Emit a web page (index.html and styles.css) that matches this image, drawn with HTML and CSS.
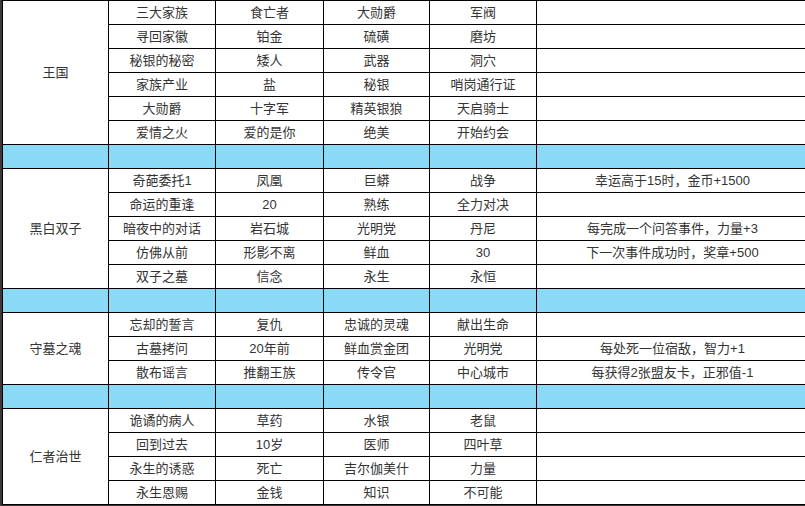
FILE: index.html
```html
<!DOCTYPE html>
<html lang="zh">
<head>
<meta charset="utf-8">
<link rel="stylesheet" href="styles.css">
</head>
<body>
<table class="grid">
<colgroup>
<col class="c1"><col class="c2"><col class="c3"><col class="c4"><col class="c5"><col class="c6">
</colgroup>
<tbody>
<tr><td rowspan="6">王国</td><td>三大家族</td><td>食亡者</td><td>大勋爵</td><td>军阀</td><td></td></tr>
<tr><td>寻回家徽</td><td>铂金</td><td>硫磺</td><td>磨坊</td><td></td></tr>
<tr><td>秘银的秘密</td><td>矮人</td><td>武器</td><td>洞穴</td><td></td></tr>
<tr><td>家族产业</td><td>盐</td><td>秘银</td><td>哨岗通行证</td><td></td></tr>
<tr><td>大勋爵</td><td>十字军</td><td>精英银狼</td><td>天启骑士</td><td></td></tr>
<tr><td>爱情之火</td><td>爱的是你</td><td>绝美</td><td>开始约会</td><td></td></tr>
<tr class="sep"><td></td><td></td><td></td><td></td><td></td><td></td></tr>
<tr><td rowspan="5">黑白双子</td><td>奇葩委托1</td><td>凤凰</td><td>巨蟒</td><td>战争</td><td>幸运高于15时，金币+1500</td></tr>
<tr><td>命运的重逢</td><td>20</td><td>熟练</td><td>全力对决</td><td></td></tr>
<tr><td>暗夜中的对话</td><td>岩石城</td><td>光明党</td><td>丹尼</td><td>每完成一个问答事件，力量+3</td></tr>
<tr><td>仿佛从前</td><td>形影不离</td><td>鲜血</td><td>30</td><td>下一次事件成功时，奖章+500</td></tr>
<tr><td>双子之墓</td><td>信念</td><td>永生</td><td>永恒</td><td></td></tr>
<tr class="sep"><td></td><td></td><td></td><td></td><td></td><td></td></tr>
<tr><td rowspan="3">守墓之魂</td><td>忘却的誓言</td><td>复仇</td><td>忠诚的灵魂</td><td>献出生命</td><td></td></tr>
<tr><td>古墓拷问</td><td>20年前</td><td>鲜血赏金团</td><td>光明党</td><td>每处死一位宿敌，智力+1</td></tr>
<tr><td>散布谣言</td><td>推翻王族</td><td>传令官</td><td>中心城市</td><td>每获得2张盟友卡，正邪值-1</td></tr>
<tr class="sep"><td></td><td></td><td></td><td></td><td></td><td></td></tr>
<tr><td rowspan="4">仁者治世</td><td>诡谲的病人</td><td>草药</td><td>水银</td><td>老鼠</td><td></td></tr>
<tr><td>回到过去</td><td>10岁</td><td>医师</td><td>四叶草</td><td></td></tr>
<tr><td>永生的诱惑</td><td>死亡</td><td>吉尔伽美什</td><td>力量</td><td></td></tr>
<tr><td>永生恩赐</td><td>金钱</td><td>知识</td><td>不可能</td><td></td></tr>
</tbody>
</table>
</body>
</html>
```

FILE: styles.css
```css
html, body {
  margin: 0;
  padding: 0;
  background: #3a3a3a;
  overflow: hidden;
  width: 805px;
  height: 506px;
}
.grid {
  margin-left: 2px;
  border-collapse: collapse;
  table-layout: fixed;
  width: 806px;
  background: #ffffff;
  font-family: "Liberation Sans", "Noto Sans CJK SC", sans-serif;
  font-size: 13px;
  color: #333333;
}
.c1 { width: 106px; }
.c2 { width: 107px; }
.c3 { width: 108px; }
.c4 { width: 106px; }
.c5 { width: 107px; }
.c6 { width: 272px; }
.grid td {
  border: 1px solid #000000;
  height: 23px;
  padding: 0;
  line-height: 22px;
  text-align: center;
  white-space: nowrap;
  overflow: hidden;
}
.grid tr.sep td {
  background: #89d9f7;
}
```
